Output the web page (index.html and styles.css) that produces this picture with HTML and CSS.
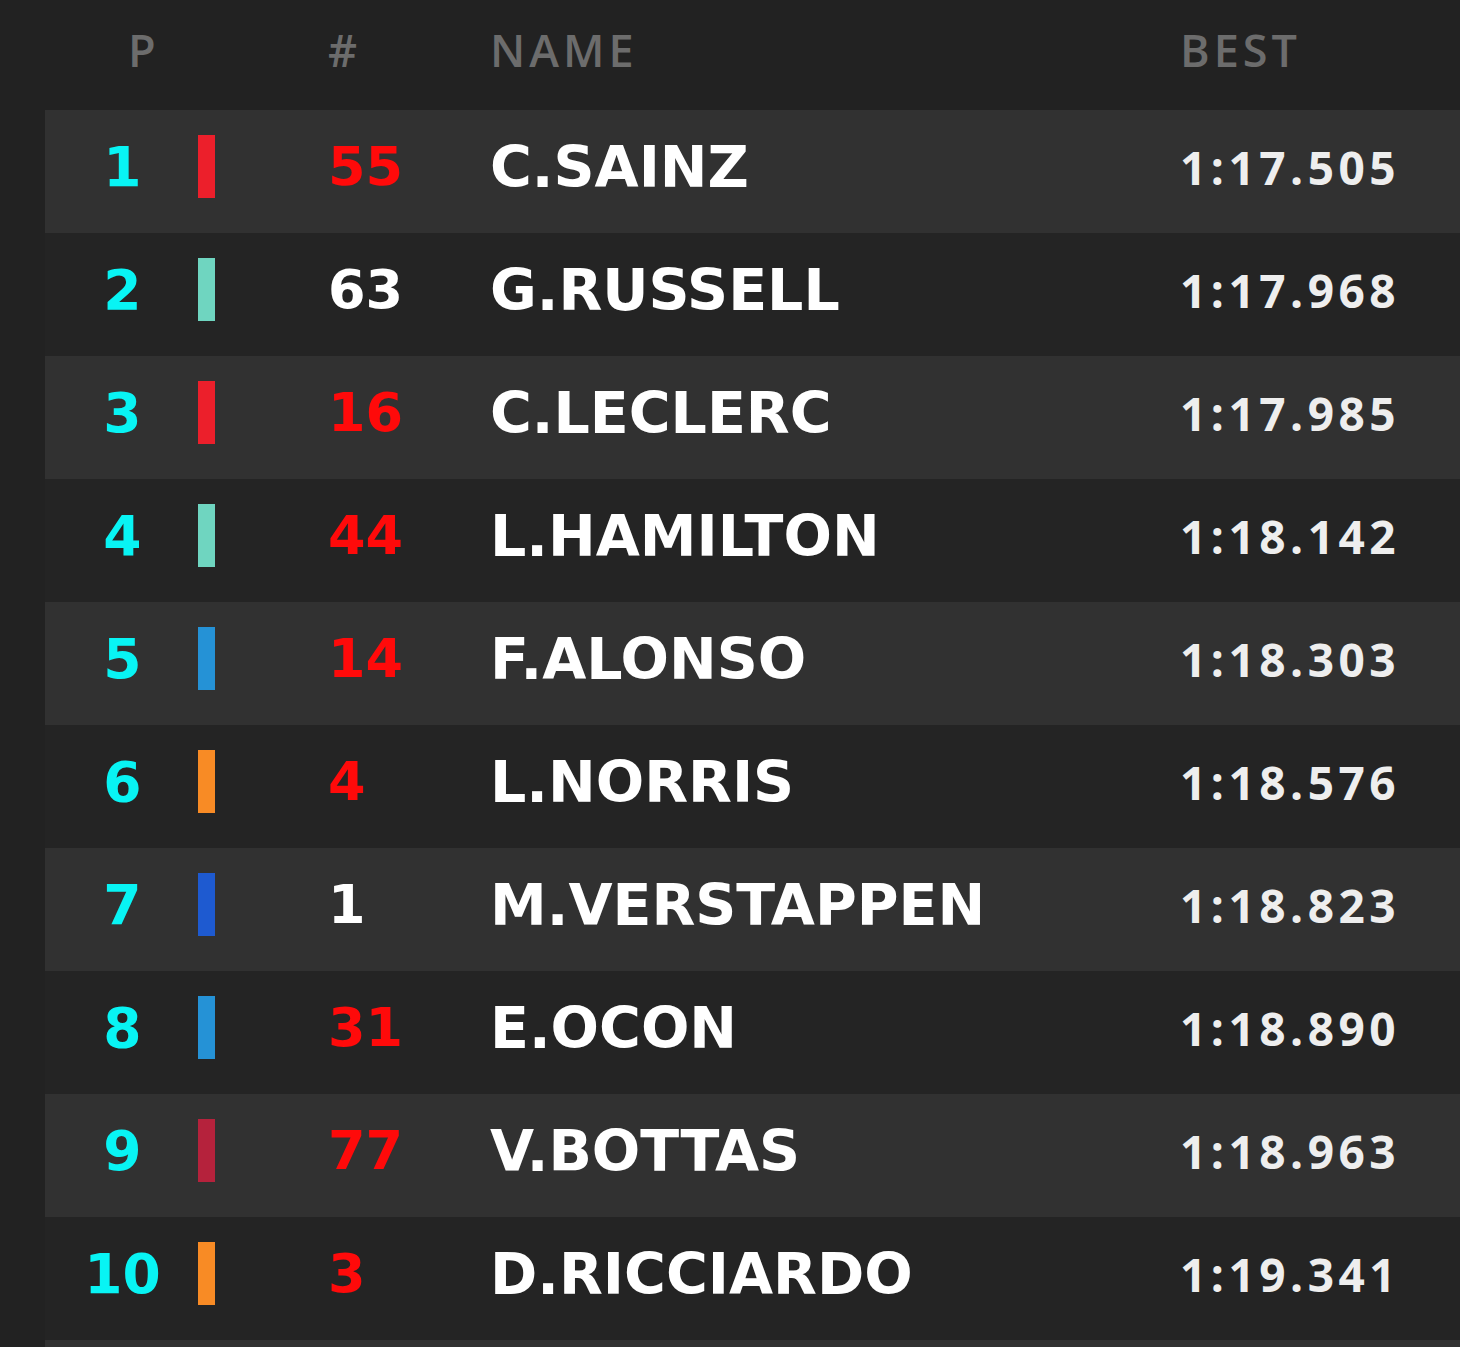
FILE: index.html
```html
<!DOCTYPE html>
<html>
<head>
<meta charset="utf-8">
<link rel="stylesheet" href="styles.css">
</head>
<body>
<div class="board">
  <div class="head">
    <span class="h-p">P</span>
    <span class="h-num">#</span>
    <span class="h-name">NAME</span>
    <span class="h-best">BEST</span>
  </div>
  <div class="row odd"><span class="pos">1</span><span class="bar ferrari"></span><span class="num red">55</span><span class="name">C.SAINZ</span><span class="best">1:17.505</span></div>
  <div class="row"><span class="pos">2</span><span class="bar mercedes"></span><span class="num">63</span><span class="name">G.RUSSELL</span><span class="best">1:17.968</span></div>
  <div class="row odd"><span class="pos">3</span><span class="bar ferrari"></span><span class="num red">16</span><span class="name">C.LECLERC</span><span class="best">1:17.985</span></div>
  <div class="row"><span class="pos">4</span><span class="bar mercedes"></span><span class="num red">44</span><span class="name">L.HAMILTON</span><span class="best">1:18.142</span></div>
  <div class="row odd"><span class="pos">5</span><span class="bar alpine"></span><span class="num red">14</span><span class="name">F.ALONSO</span><span class="best">1:18.303</span></div>
  <div class="row"><span class="pos">6</span><span class="bar mclaren"></span><span class="num red">4</span><span class="name">L.NORRIS</span><span class="best">1:18.576</span></div>
  <div class="row odd"><span class="pos">7</span><span class="bar redbull"></span><span class="num">1</span><span class="name">M.VERSTAPPEN</span><span class="best">1:18.823</span></div>
  <div class="row"><span class="pos">8</span><span class="bar alpine"></span><span class="num red">31</span><span class="name">E.OCON</span><span class="best">1:18.890</span></div>
  <div class="row odd"><span class="pos">9</span><span class="bar alfa"></span><span class="num red">77</span><span class="name">V.BOTTAS</span><span class="best">1:18.963</span></div>
  <div class="row"><span class="pos">10</span><span class="bar mclaren"></span><span class="num red">3</span><span class="name">D.RICCIARDO</span><span class="best">1:19.341</span></div>
  <div class="row odd tail"></div>
</div>
</body>
</html>
```
FILE: styles.css
```css
html, body {
  margin: 0;
  padding: 0;
  background: #222222;
}
body {
  width: 1460px;
  height: 1347px;
  overflow: hidden;
}
.board {
  display: flex;
  flex-direction: column;
}
.head {
  height: 110px;
  display: grid;
  grid-template-columns: 328px 162px 690px 1fr;
  align-items: center;
  font-family: "Open Sans", sans-serif;
  font-weight: 600;
  font-size: 45px;
  letter-spacing: 4px;
  color: #6c6c6c;
  padding-bottom: 12px;
  box-sizing: border-box;
}
.h-p { padding-left: 128px; }
.row {
  margin-left: 45px;
  height: 123px;
  flex: none;
  display: grid;
  grid-template-columns: 153px 17px 113px 162px 690px 1fr;
  align-items: center;
  padding-bottom: 10px;
  box-sizing: border-box;
  background: #242424;
}
.row.odd { background: #313131; }
.row.tail { height: 7px; padding: 0; }
.pos {
  grid-column: 1;
  text-align: center;
  font-family: "DejaVu Sans", sans-serif;
  font-weight: bold;
  font-size: 55px;
  color: #08f4f4;
  padding-left: 2px;
}
.bar {
  grid-column: 2;
  height: 63px;
  width: 17px;
}
.ferrari { background: #ec1f2b; }
.mercedes { background: #6fd5c0; }
.alpine { background: #2592d6; }
.mclaren { background: #f88b25; }
.redbull { background: #1e5ad0; }
.alfa { background: #b5223c; }
.num {
  grid-column: 4;
  font-family: "DejaVu Sans", sans-serif;
  font-weight: bold;
  font-size: 54px;
  color: #ffffff;
}
.num.red { color: #ff0a0a; }
.name {
  grid-column: 5;
  font-family: "DejaVu Sans", sans-serif;
  font-weight: bold;
  font-size: 57px;
  color: #ffffff;
}
.best {
  grid-column: 6;
  font-family: "Open Sans", sans-serif;
  font-weight: 700;
  font-size: 46px;
  letter-spacing: 4.5px;
  color: #eeeeee;
}
```
